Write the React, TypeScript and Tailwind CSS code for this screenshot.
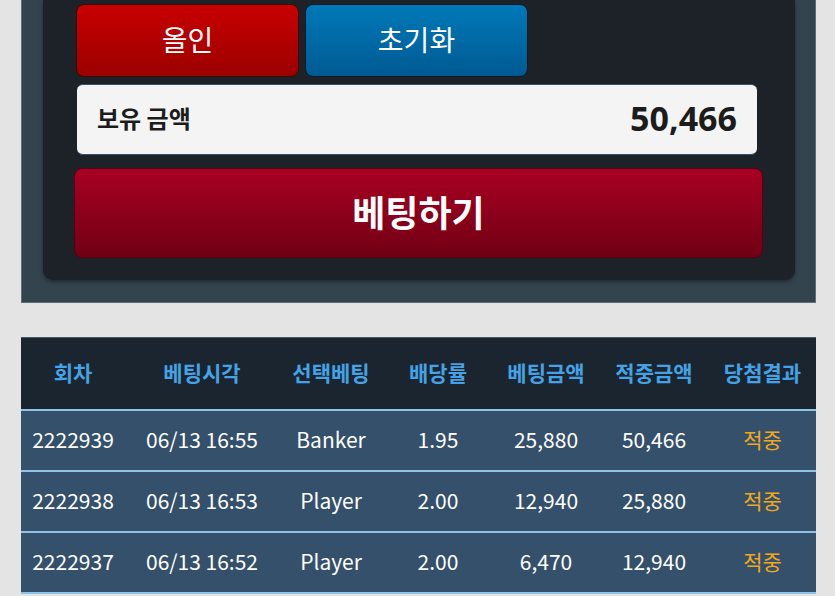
import React from "react";

const rows = [
  ["2222939", "06/13 16:55", "Banker", "1.95", "25,880", "50,466", "적중"],
  ["2222938", "06/13 16:53", "Player", "2.00", "12,940", "25,880", "적중"],
  ["2222937", "06/13 16:52", "Player", "2.00", "6,470", "12,940", "적중"],
];

const headers = ["회차", "베팅시각", "선택베팅", "배당률", "베팅금액", "적중금액", "당첨결과"];
const widths = ["w-[104px]", "w-[154px]", "w-[104px]", "w-[110px]", "w-[106px]", "w-[110px]", "w-[107px]"];

export default function App() {
  return (
    <div
      className="w-[835px] h-[596px] overflow-hidden bg-[#e4e4e4]"
      style={{ fontFamily: '"Noto Sans CJK KR", "Noto Sans", sans-serif' }}
    >
      <div className="ml-[21px] w-[795px] h-[303px] bg-[#34444f] border-b border-x border-[#5d6d7a] pl-[21px] pr-[20px]">
        <div className="h-[280px] bg-[#1c2227] rounded-b-[10px] pl-[31px] pt-[4px] shadow-[0_2px_4px_rgba(0,0,0,0.4)]">
          <div className="flex gap-[6px] ml-[2px]">
            <div className="w-[223px] h-[73px] rounded-[8px] border border-[#3a0a0a] bg-gradient-to-b from-[#c80000] to-[#9c0000] flex items-center justify-center text-white text-[28px] pb-[4px]">
              올인
            </div>
            <div className="w-[223px] h-[73px] rounded-[8px] border border-[#0a1a2a] bg-gradient-to-b from-[#0079b8] to-[#005a92] flex items-center justify-center text-white text-[28px] pb-[4px]">
              초기화
            </div>
          </div>
          <div className="mt-[7px] ml-[3px] w-[680px] h-[71px] rounded-[6px] bg-[#f4f4f5] border-y border-[#34506a] flex items-center justify-between pl-[20px] pr-[20px]">
            <span className="text-[24px] font-bold text-[#1c1c1c] pb-[3px]">보유 금액</span>
            <span className="text-[34px] font-bold text-[#1c1c1c] pb-[3px]" style={{ fontFamily: '"Noto Sans", sans-serif' }}>50,466</span>
          </div>
          <div className="mt-[13px] w-[689px] h-[90px] rounded-[8px] border border-[#5a0010] bg-gradient-to-b from-[#a90022] to-[#710014] flex items-center justify-center text-white text-[36px] font-bold pb-[4px]">
            베팅하기
          </div>
        </div>
      </div>

      <div className="mt-[34px] ml-[21px] w-[795px]">
        <div className="flex h-[72px] bg-[#1b2530] items-center border-t border-[#4a5763]">
          {headers.map((h, i) => (
            <div key={h} className={`${widths[i]} text-center text-[21px] font-bold text-[#45a2e4] pb-[2px]`}>
              {h}
            </div>
          ))}
        </div>
        {rows.map((r) => (
          <div key={r[0]} className="flex h-[61px] items-center bg-[#34506a] border-t-2 border-[#8fc4e8]">
            {r.map((c, i) => (
              <div
                key={i}
                className={`${widths[i]} text-center text-[21px] pb-[2px] ${i === 6 ? "text-[#f2a81d]" : "text-white"}`}
              >
                {c}
              </div>
            ))}
          </div>
        ))}
        <div className="h-[2px] bg-[#8fc4e8]" />
      </div>
    </div>
  );
}
